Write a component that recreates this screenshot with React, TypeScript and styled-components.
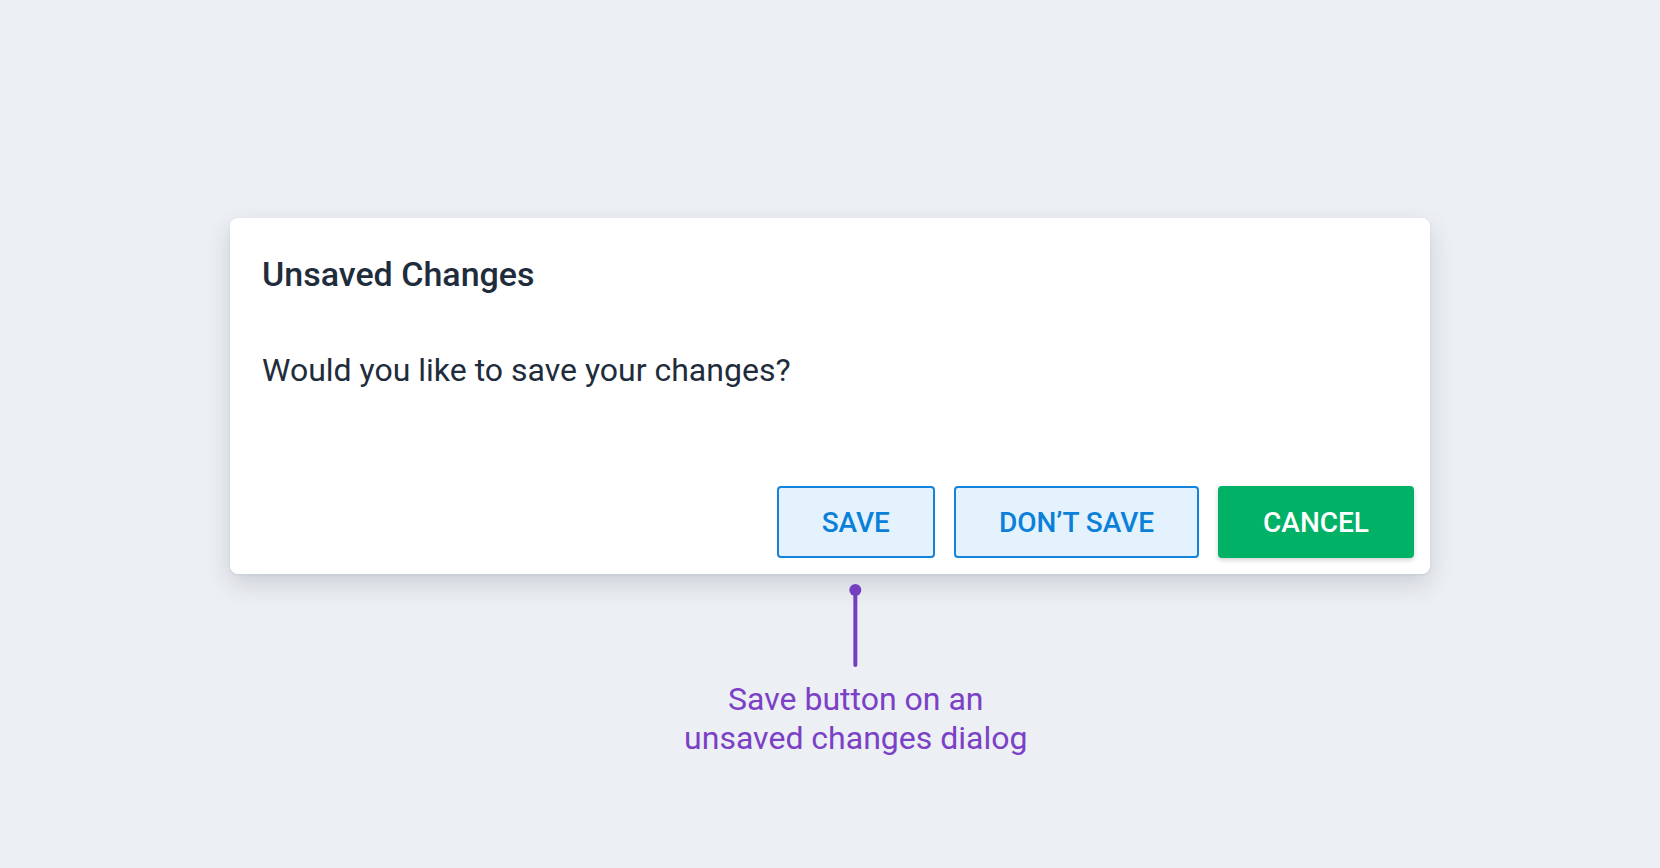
import React from "react";
import styled, { createGlobalStyle } from "styled-components";

const GlobalStyle = createGlobalStyle`
  html, body {
    margin: 0;
    padding: 0;
    background: #eceff3;
  }
  body {
    font-family: Roboto, "Liberation Sans", Arial, sans-serif;
    -webkit-font-smoothing: antialiased;
  }
  * { box-sizing: border-box; }
`;

const Page = styled.main`
  min-height: 868px;
  width: 100%;
  display: flex;
  flex-direction: column;
  align-items: center;
  padding-top: 218px;
  background: #eceff3;
`;

const Dialog = styled.section`
  width: 1200px;
  height: 356px;
  background: #ffffff;
  border-radius: 8px;
  box-shadow: 0 10px 24px rgba(40, 52, 70, 0.16), 0 1px 3px rgba(40, 52, 70, 0.08);
  display: flex;
  flex-direction: column;
  padding: 36px 16px 16px 32px;
`;

const Title = styled.h2`
  margin: 0;
  font-size: 34px;
  line-height: 40px;
  font-weight: 500;
  color: #1e2c3b;
  letter-spacing: 0;
`;

const Message = styled.p`
  margin: 58px 0 0;
  font-size: 32px;
  line-height: 36px;
  font-weight: 400;
  color: #1e2c3b;
`;

const Actions = styled.div`
  margin-top: auto;
  display: flex;
  justify-content: flex-end;
  align-items: center;
  gap: 19px;
`;

const ButtonSlot = styled.div`
  position: relative;
  display: flex;
`;

const Button = styled.button<{ $variant: "outline" | "primary" }>`
  height: 72px;
  padding: 0 43px;
  border-radius: 4px;
  border: 2px solid ${(p) => (p.$variant === "primary" ? "#00b166" : "#1284dc")};
  background: ${(p) => (p.$variant === "primary" ? "#00b166" : "#e4f2fe")};
  color: ${(p) => (p.$variant === "primary" ? "#ffffff" : "#0b80d9")};
  font-family: Roboto, "Liberation Sans", Arial, sans-serif;
  font-size: 28px;
  font-weight: 500;
  letter-spacing: 0;
  text-transform: uppercase;
  box-shadow: ${(p) => (p.$variant === "primary" ? "0 2px 5px rgba(0, 0, 0, 0.18)" : "none")};
  cursor: pointer;
  white-space: nowrap;
`;

const Callout = styled.div`
  position: absolute;
  top: calc(100% + 26px);
  left: 50%;
  transform: translateX(-50%);
  display: flex;
  flex-direction: column;
  align-items: center;
  pointer-events: none;
`;

const Dot = styled.span`
  width: 12px;
  height: 12px;
  border-radius: 50%;
  background: #7440c0;
`;

const Stem = styled.span`
  width: 4px;
  height: 72px;
  margin-top: -1px;
  border-radius: 0 0 2px 2px;
  background: #7440c0;
`;

const CalloutText = styled.p`
  margin: 13px 0 0;
  font-size: 32px;
  line-height: 39px;
  font-weight: 400;
  color: #7b40c6;
  text-align: center;
  white-space: nowrap;
`;

export default function App() {
  return (
    <>
      <GlobalStyle />
      <Page>
        <Dialog role="dialog" aria-labelledby="dlg-title">
          <Title id="dlg-title">Unsaved Changes</Title>
          <Message>Would you like to save your changes?</Message>
          <Actions>
            <ButtonSlot>
              <Button $variant="outline">Save</Button>
              <Callout>
                <Dot />
                <Stem />
                <CalloutText>
                  Save button on an
                  <br />
                  unsaved changes dialog
                </CalloutText>
              </Callout>
            </ButtonSlot>
            <ButtonSlot>
              <Button $variant="outline">Don’t Save</Button>
            </ButtonSlot>
            <ButtonSlot>
              <Button $variant="primary">Cancel</Button>
            </ButtonSlot>
          </Actions>
        </Dialog>
      </Page>
    </>
  );
}
